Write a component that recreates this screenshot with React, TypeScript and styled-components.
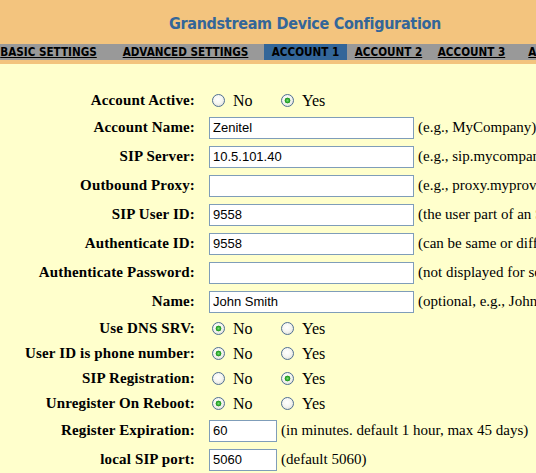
import React from 'react';
import styled, { createGlobalStyle } from 'styled-components';

const Global = createGlobalStyle`
  html, body { margin: 0; padding: 0; background: #FFFFCC; overflow: hidden; }
  body { font-family: "Liberation Serif", "Times New Roman", serif; color: #000; }
`;

const Page = styled.div`
  width: 620px;
  min-height: 473px;
  background: #FFFFCC;
`;

const Header = styled.header`
  background: #F3C47E;
  height: 44px;
  display: flex;
  align-items: center;
  justify-content: center;
  padding-right: 10px;
`;

const Title = styled.h1`
  margin: 0;
  padding-top: 2px;
  font-family: "DejaVu Sans Condensed", "DejaVu Sans", sans-serif;
  font-stretch: condensed;
  font-weight: bold;
  font-size: 16px;
  letter-spacing: -0.3px;
  color: #336699;
`;

const NavBar = styled.nav`
  display: flex;
  height: 16px;
  margin-left: -10px;
  background: #999999;
  border-bottom: 4px solid #F3C47E;
`;

const Tab = styled.a<{ $w: number; $active?: boolean }>`
  flex: none;
  width: ${(p) => p.$w}px;
  display: flex;
  align-items: center;
  justify-content: center;
  font-family: "DejaVu Sans Condensed", "DejaVu Sans", sans-serif;
  font-stretch: condensed;
  font-weight: bold;
  font-size: 11.6px;
  color: #000;
  white-space: nowrap;
  text-decoration: ${(p) => (p.$active ? 'none' : 'underline')};
  background: ${(p) => (p.$active ? '#336699' : 'transparent')};
`;

const Form = styled.div`
  margin-top: 24px;
  display: flex;
  flex-direction: column;
`;

const Row = styled.div<{ $h: number }>`
  display: grid;
  grid-template-columns: 195px max-content;
  column-gap: 14px;
  align-items: center;
  height: ${(p) => p.$h}px;
`;

const Label = styled.label`
  text-align: right;
  font-weight: bold;
  font-size: 15px;
  letter-spacing: 0.15px;
  white-space: nowrap;
`;

const Field = styled.div`
  display: flex;
  align-items: center;
  gap: 4px;
  white-space: nowrap;
`;

const TextInput = styled.input<{ $w: number }>`
  box-sizing: border-box;
  width: ${(p) => p.$w}px;
  height: 22px;
  margin: 0;
  padding: 1px 3px;
  border: 1px solid #7F9DB9;
  background: #fff;
  font-family: "Liberation Sans", Arial, sans-serif;
  font-size: 13px;
  color: #000;
  outline: none;
`;

const Hint = styled.span`
  font-size: 15px;
`;

const RadioOption = styled.label<{ $w?: number }>`
  display: inline-flex;
  align-items: center;
  width: ${(p) => (p.$w ? `${p.$w}px` : 'auto')};
  font-size: 16px;
`;

const Radio = styled.input.attrs({ type: 'radio' })`
  appearance: none;
  -webkit-appearance: none;
  box-sizing: border-box;
  width: 13px;
  height: 13px;
  margin: 0 8px 0 3px;
  border-radius: 50%;
  border: 1px solid #4f6f93;
  background: radial-gradient(circle at 45% 40%, #ffffff 0%, #f6f6f2 45%, #d6d6ce 100%);
  &:checked {
    background:
      radial-gradient(circle at 50% 50%, #7be07b 0px, #2aa52a 2px, #1e8f1e 2.6px, transparent 3.2px),
      radial-gradient(circle at 45% 40%, #ffffff 0%, #f6f6f2 45%, #d6d6ce 100%);
  }
`;

type InputRow = { kind: 'input'; label: string; value: string; w: number; hint: string };
type RadioRow = { kind: 'radio'; label: string; yes: boolean };
type RowDef = InputRow | RadioRow;

const rows: RowDef[] = [
  { kind: 'radio', label: 'Account Active:', yes: true },
  { kind: 'input', label: 'Account Name:', value: 'Zenitel', w: 205, hint: '(e.g., MyCompany)' },
  { kind: 'input', label: 'SIP Server:', value: '10.5.101.40', w: 205, hint: '(e.g., sip.mycompany.com, or IP address)' },
  { kind: 'input', label: 'Outbound Proxy:', value: '', w: 205, hint: '(e.g., proxy.myprovider.com, or IP address, if any)' },
  { kind: 'input', label: 'SIP User ID:', value: '9558', w: 205, hint: '(the user part of an SIP address)' },
  { kind: 'input', label: 'Authenticate ID:', value: '9558', w: 205, hint: '(can be same or different from SIP User ID)' },
  { kind: 'input', label: 'Authenticate Password:', value: '', w: 205, hint: '(not displayed for security protection)' },
  { kind: 'input', label: 'Name:', value: 'John Smith', w: 205, hint: '(optional, e.g., John Doe)' },
  { kind: 'radio', label: 'Use DNS SRV:', yes: false },
  { kind: 'radio', label: 'User ID is phone number:', yes: false },
  { kind: 'radio', label: 'SIP Registration:', yes: true },
  { kind: 'radio', label: 'Unregister On Reboot:', yes: false },
  { kind: 'input', label: 'Register Expiration:', value: '60', w: 68, hint: '(in minutes. default 1 hour, max 45 days)' },
  { kind: 'input', label: 'local SIP port:', value: '5060', w: 68, hint: '(default 5060)' },
];

const tabs = [
  { name: 'BASIC SETTINGS', w: 117 },
  { name: 'ADVANCED SETTINGS', w: 157 },
  { name: 'ACCOUNT 1', w: 83, active: true },
  { name: 'ACCOUNT 2', w: 83 },
  { name: 'ACCOUNT 3', w: 83 },
  { name: 'ACCOUNT 4', w: 98 },
];

export default function App() {
  return (
    <Page>
      <Global />
      <Header>
        <Title>Grandstream Device Configuration</Title>
      </Header>
      <NavBar>
        {tabs.map((t) => (
          <Tab key={t.name} $w={t.w} $active={t.active} href="#">
            {t.name}
          </Tab>
        ))}
      </NavBar>
      <Form>
        {rows.map((r, i) =>
          r.kind === 'input' ? (
            <Row key={i} $h={29}>
              <Label>{r.label}</Label>
              <Field>
                <TextInput
                  $w={r.w}
                  type={r.label.includes('Password') ? 'password' : 'text'}
                  defaultValue={r.value}
                />
                <Hint>{r.hint}</Hint>
              </Field>
            </Row>
          ) : (
            <Row key={i} $h={25}>
              <Label>{r.label}</Label>
              <Field>
                <RadioOption $w={65}>
                  <Radio name={`r${i}`} defaultChecked={!r.yes} />
                  No
                </RadioOption>
                <RadioOption>
                  <Radio name={`r${i}`} defaultChecked={r.yes} />
                  Yes
                </RadioOption>
              </Field>
            </Row>
          )
        )}
      </Form>
    </Page>
  );
}
